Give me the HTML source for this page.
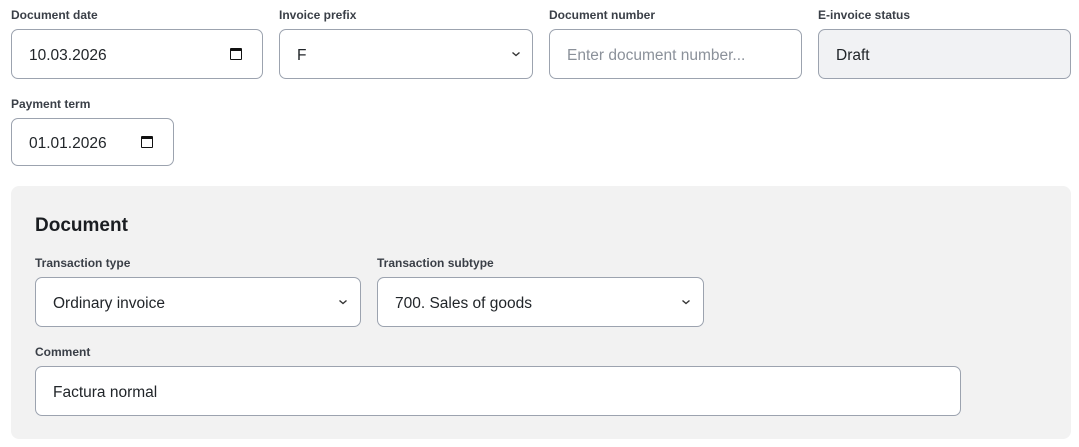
<!DOCTYPE html>
<html><head><style>
*{box-sizing:border-box;margin:0;padding:0}
body{width:1079px;height:447px;background:#fff;font-family:"Liberation Sans",sans-serif;position:relative;overflow:hidden;color:#1f2328}
.l{position:absolute;font-size:12px;font-weight:600;color:#3a3f47;line-height:14px}
.i{position:absolute;border:1px solid #9ca3af;border-radius:7px;background:#fff;font-size:15.5px;display:flex;align-items:center;padding-left:17px;padding-top:3px;color:#212529}
.ph{color:#8b919a}
.dis{background:#f1f2f4}
.cal{position:absolute;top:50%;transform:translateY(-50%);width:12px;height:12px;border:1.5px solid #111;border-top-width:3px;border-radius:1px}
.chev{position:absolute;top:50%;width:10px;height:6px;transform:translateY(-50%)}
.panel{position:absolute;left:11px;top:186px;width:1060px;height:253px;background:#f2f2f2;border-radius:8px}
</style></head><body>
<div class="l" style="left:11px;top:8px">Document date</div>
<div class="i" style="left:11px;top:29px;width:252px;height:50px">10.03.2026<div class="cal" style="left:218px"></div></div>
<div class="l" style="left:279px;top:8px">Invoice prefix</div>
<div class="i" style="left:279px;top:29px;width:254px;height:50px">F<svg class="chev" style="left:231px" viewBox="0 0 10 6"><path d="M1.5 1.5L5 4.5 8.5 1.5" fill="none" stroke="#333" stroke-width="1.4"/></svg></div>
<div class="l" style="left:549px;top:8px">Document number</div>
<div class="i ph" style="left:549px;top:29px;width:253px;height:50px">Enter document number...</div>
<div class="l" style="left:818px;top:8px">E-invoice status</div>
<div class="i dis" style="left:818px;top:29px;width:253px;height:50px">Draft</div>
<div class="l" style="left:11px;top:97px">Payment term</div>
<div class="i" style="left:11px;top:118px;width:163px;height:48px">01.01.2026<div class="cal" style="left:129px"></div></div>
<div class="panel"></div>
<div style="position:absolute;left:35px;top:215px;font-size:19px;font-weight:700;color:#1a1d21">Document</div>
<div class="l" style="left:35px;top:256px">Transaction type</div>
<div class="i" style="left:35px;top:277px;width:326px;height:50px">Ordinary invoice<svg class="chev" style="left:302px" viewBox="0 0 10 6"><path d="M1.5 1.5L5 4.5 8.5 1.5" fill="none" stroke="#333" stroke-width="1.4"/></svg></div>
<div class="l" style="left:377px;top:256px">Transaction subtype</div>
<div class="i" style="left:377px;top:277px;width:327px;height:50px">700. Sales of goods<svg class="chev" style="left:303px" viewBox="0 0 10 6"><path d="M1.5 1.5L5 4.5 8.5 1.5" fill="none" stroke="#333" stroke-width="1.4"/></svg></div>
<div class="l" style="left:35px;top:345px">Comment</div>
<div class="i" style="left:35px;top:366px;width:926px;height:50px">Factura normal</div>
</body></html>
